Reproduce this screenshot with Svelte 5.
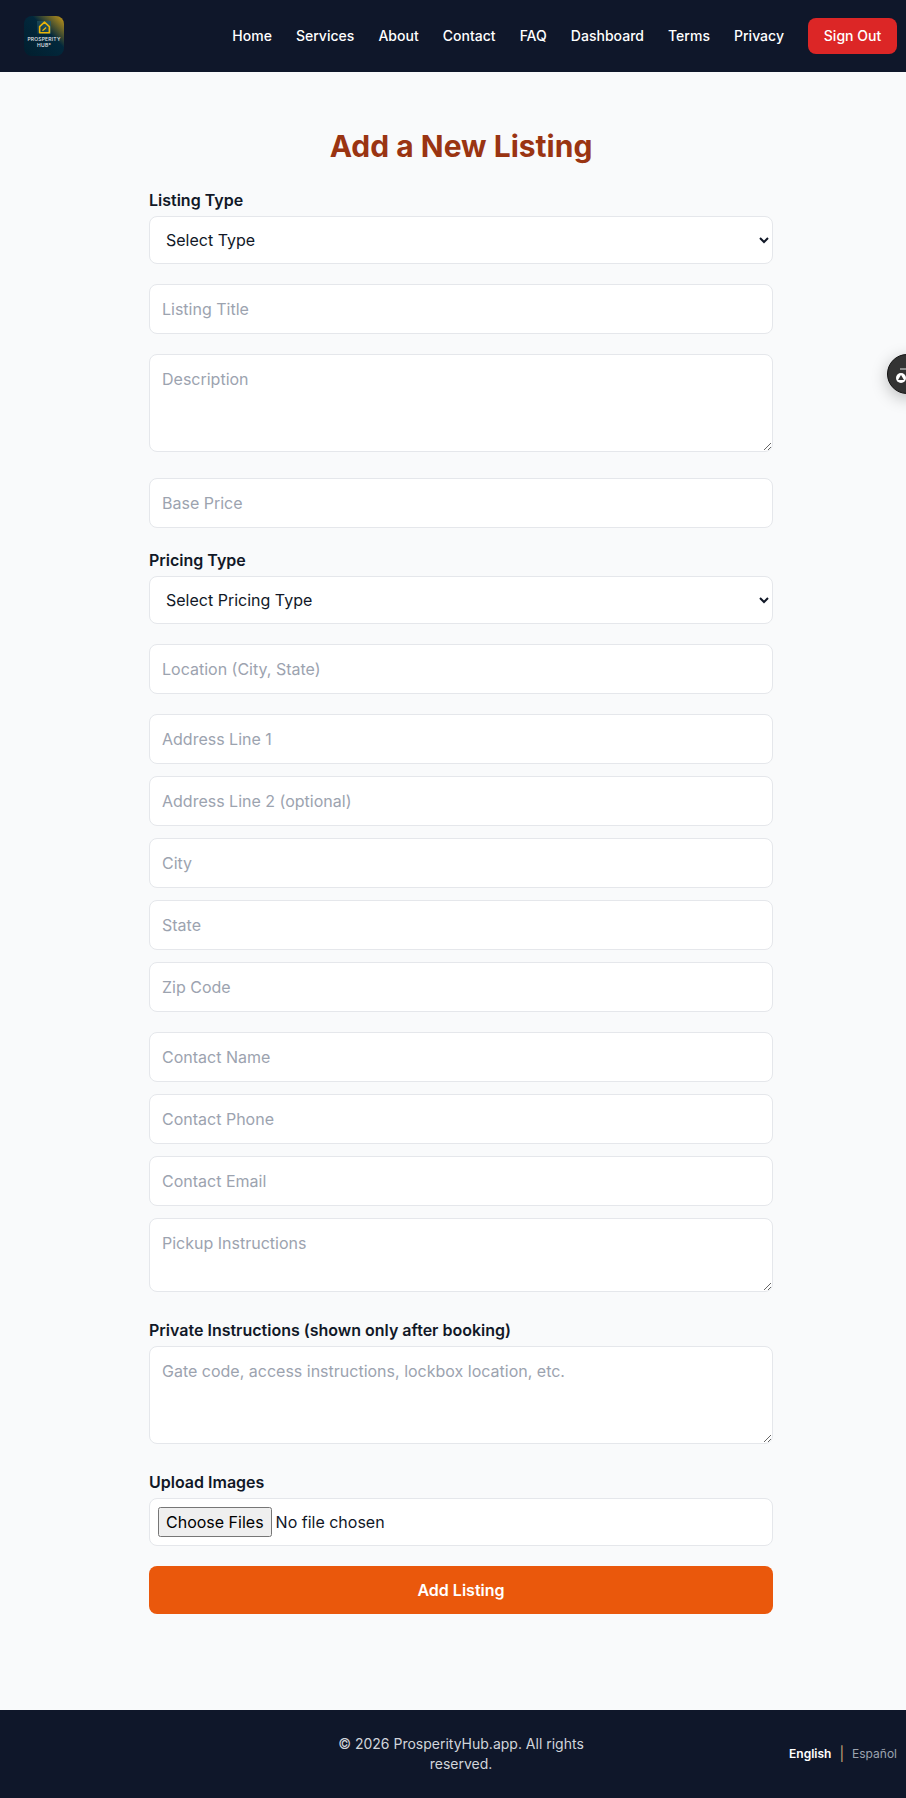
<script>
    let links = ['Home', 'Services', 'About', 'Contact', 'FAQ', 'Dashboard', 'Terms', 'Privacy']
    let addressFields = ['Address Line 1', 'Address Line 2 (optional)', 'City', 'State', 'Zip Code']
    let contactFields = ['Contact Name', 'Contact Phone', 'Contact Email']
</script>

<header>
    <div class="logo">
        <div class="mark">
            <svg viewBox="0 0 16 16" width="13" height="13" fill="none" stroke="#eab308" stroke-width="2">
                <path d="M8 1.5 L14 7 V14.5 H2 V7 Z" stroke-linejoin="round" />
                <path d="M5.5 12 L10 8" stroke-width="1.6" />
            </svg>
        </div>
        <span class="logo-text">PROSPERITY<br />HUB°</span>
    </div>
    <nav>
        {#each links as link}
            <a href="#top">{link}</a>
        {/each}
        <button class="signout">Sign Out</button>
    </nav>
</header>

<main>
    <h1>Add a New Listing</h1>
    <form>
        <div class="field">
            <label for="type">Listing Type</label>
            <select id="type"><option>Select Type</option></select>
        </div>

        <input placeholder="Listing Title" />
        <div><textarea rows="3" placeholder="Description"></textarea></div>
        <input placeholder="Base Price" />

        <div class="field">
            <label for="pricing">Pricing Type</label>
            <select id="pricing"><option>Select Pricing Type</option></select>
        </div>

        <input placeholder="Location (City, State)" />

        <div class="group">
            {#each addressFields as f}
                <input placeholder={f} />
            {/each}
        </div>

        <div class="group">
            {#each contactFields as f}
                <input placeholder={f} />
            {/each}
            <div><textarea class="short" rows="2" placeholder="Pickup Instructions"></textarea></div>
        </div>

        <div class="field">
            <label for="private">Private Instructions (shown only after booking)</label>
            <textarea id="private" rows="3" placeholder="Gate code, access instructions, lockbox location, etc."></textarea>
        </div>

        <div class="field">
            <label for="files">Upload Images</label>
            <input id="files" class="file" type="file" multiple />
        </div>

        <button type="button" class="submit">Add Listing</button>
    </form>
</main>

<footer>
    <p>© 2026 ProsperityHub.app. All rights reserved.</p>
    <div class="lang">
        <span class="on">English</span>
        <span class="bar">|</span>
        <span class="off">Español</span>
    </div>
</footer>

<div class="float">
    <svg viewBox="0 0 24 24" width="24" height="24">
        <circle cx="6" cy="16" r="5" fill="#fff" />
        <path d="M6 13 L9 18 H3 Z" fill="#333" />
        <path d="M5 7 H22" stroke="#ccc" stroke-width="1.2" />
    </svg>
</div>

<style>
    :global(html) {
        overflow-x: hidden;
    }

    :global(body) {
        margin: 0;
        background: #f9fafb;
        font-family: Inter, "Liberation Sans", sans-serif;
        line-height: 1.5;
        color: #111827;
    }

    header {
        height: 72px;
        background: #0f172a;
        display: flex;
        align-items: center;
        justify-content: space-between;
        padding: 0 9px 0 24px;
    }

    .logo {
        width: 40px;
        height: 40px;
        border-radius: 8px;
        background: linear-gradient(45deg, #011e2e 0%, #02283c 60%, #c99a16 100%);
        display: flex;
        flex-direction: column;
        align-items: center;
        padding-top: 5px;
        box-sizing: border-box;
    }

    .mark {
        width: 14px;
        height: 13px;
        background: linear-gradient(45deg, #04324a, #2f5a5e);
        display: flex;
        align-items: center;
        justify-content: center;
    }

    .logo-text {
        color: #e5e7eb;
        font-size: 5px;
        line-height: 6px;
        font-weight: 500;
        letter-spacing: 0.2px;
        text-align: center;
        margin-top: 2px;
    }

    nav {
        display: flex;
        align-items: center;
        gap: 24px;
    }

    nav a {
        color: #fff;
        font-size: 14px;
        font-weight: 500;
        letter-spacing: 0.02px;
        text-decoration: none;
        padding-bottom: 2px;
    }

    .signout {
        width: 89px;
        height: 36px;
        border: 0;
        border-radius: 8px;
        background: #dc2626;
        color: #fff;
        font: 500 14px Inter, sans-serif;
        padding: 0 0 2px;
    }

    main {
        width: 624px;
        padding: 56px 0 96px 149px;
    }

    h1 {
        margin: 0 0 24px;
        font-size: 30px;
        line-height: 36px;
        font-weight: 700;
        color: #9a3412;
        text-align: center;
    }

    form {
        display: flex;
        flex-direction: column;
        gap: 20px;
    }

    .group {
        display: flex;
        flex-direction: column;
        gap: 12px;
    }

    label {
        display: block;
        font-size: 16px;
        line-height: 24px;
        font-weight: 600;
        margin-bottom: 4px;
    }

    input, textarea, select {
        width: 100%;
        box-sizing: border-box;
        border: 1px solid #e5e7eb;
        border-radius: 8px;
        background: #fff;
        font: 16px/24px Inter, sans-serif;
        color: #111827;
        padding: 12px;
    }

    input {
        height: 50px;
    }

    input::placeholder, textarea::placeholder {
        color: #9ca3af;
    }

    textarea {
        height: 98px;
    }

    textarea.short {
        height: 74px;
    }

    select {
        height: 48px;
    }

    input.file {
        height: 48px;
        padding: 8px;
    }

    input.file::file-selector-button {
        font: 16px/24px Inter, sans-serif;
        height: 30px;
        padding: 1px 6px;
        margin-right: 4px;
    }

    .submit {
        height: 48px;
        border: 0;
        border-radius: 8px;
        background: #ea580c;
        color: #fff;
        font: 600 16px Inter, sans-serif;
    }

    footer {
        height: 88px;
        background: #0f172a;
        display: grid;
        grid-template-columns: 1fr 268px 1fr;
        align-items: center;
        padding: 0 9px 0 25px;
    }

    footer p {
        grid-column: 2;
        margin: 0;
        color: #d1d5db;
        font-size: 14px;
        line-height: 20px;
        text-align: center;
    }

    .lang {
        justify-self: end;
        display: flex;
        align-items: center;
        gap: 8px;
        font-size: 12px;
    }

    .on {
        color: #fff;
        font-weight: 600;
    }

    .off {
        color: #9ca3af;
    }

    .bar {
        color: #c8a878;
        font-size: 14px;
        line-height: 1;
    }

    .float {
        position: absolute;
        top: 354px;
        left: 887px;
        width: 40px;
        height: 40px;
        box-sizing: border-box;
        border-radius: 50%;
        border: 1px solid #111;
        background: #333;
        box-shadow: 0 4px 16px rgba(0, 0, 0, 0.25);
        display: flex;
        align-items: center;
        justify-content: center;
    }
</style>
